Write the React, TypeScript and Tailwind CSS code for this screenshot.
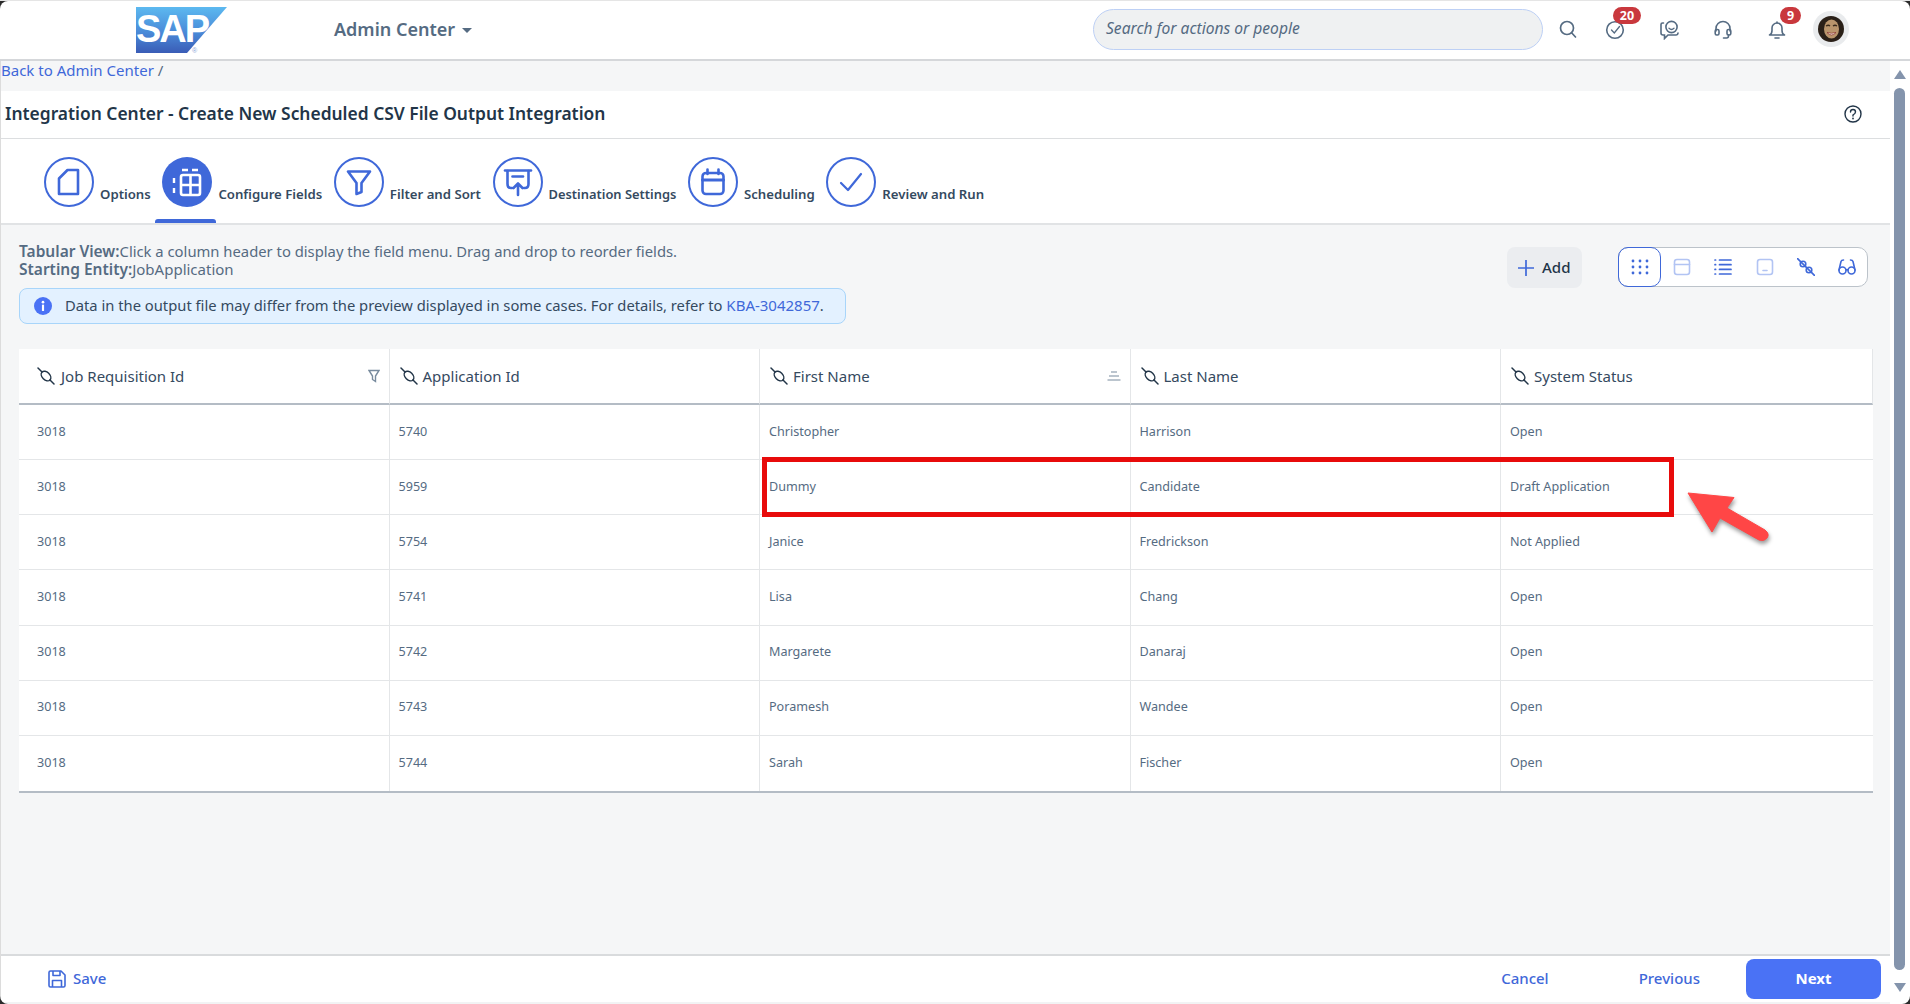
import React from "react";

const BLUE = "#3f68d9";

function Plug({ className = "" }: { className?: string }) {
  return (
    <svg viewBox="0 0 18 18" className={className} fill="none" stroke="#223548" strokeWidth="1.5" strokeLinecap="round">
      <path d="M1 1 5 5M13 13 17 17" />
      <ellipse cx="9" cy="9" rx="5.6" ry="3.8" transform="rotate(45 9 9)" />
    </svg>
  );
}

function HeaderIcon({ kind }: { kind: string }) {
  const c = "#556b82";
  const cls = "w-[22px] h-[22px] block";
  if (kind === "search")
    return (
      <svg viewBox="0 0 22 22" className={cls} fill="none" stroke={c} strokeWidth="1.7" strokeLinecap="round">
        <circle cx="10" cy="10" r="6.5" />
        <path d="M14.8 15 18.5 19" />
      </svg>
    );
  if (kind === "check")
    return (
      <svg viewBox="0 0 22 22" className={cls} fill="none" stroke={c} strokeWidth="1.6" strokeLinecap="round">
        <circle cx="11" cy="12" r="8.3" />
        <path d="M7.5 12 10.3 15 15.5 8.5" strokeWidth="1.3" />
      </svg>
    );
  if (kind === "chat")
    return (
      <svg viewBox="0 0 22 22" className={cls} fill="none" stroke={c} strokeWidth="1.6" strokeLinecap="round">
        <path d="M5.5 5H4.5Q3 5 3 6.5V15Q3 17 5 17H6.5V20.5L10 17H18Q19.8 17 20 15" />
        <circle cx="13.5" cy="9" r="5.6" />
        <path d="M11 10.3Q13.5 12.6 16 10.3" strokeWidth="1.3" />
      </svg>
    );
  if (kind === "head")
    return (
      <svg viewBox="0 0 22 22" className={cls} fill="none" stroke={c} strokeWidth="1.6" strokeLinecap="round">
        <path d="M4 13V10.5A7 7 0 0 1 18 10.5V13" />
        <rect x="3.2" y="11.5" width="3.8" height="5.5" rx="1.5" />
        <rect x="15" y="11.5" width="3.8" height="5.5" rx="1.5" />
        <path d="M16.5 17V18Q16.5 20 14.5 20H11.5" />
      </svg>
    );
  return (
    <svg viewBox="0 0 22 22" className={cls} fill="none" stroke={c} strokeWidth="1.6" strokeLinecap="round" strokeLinejoin="round">
      <path d="M3.5 17Q6 16 6 12.5V10A5 5 0 0 1 16 10V12.5Q16 16 18.5 17Z" />
      <path d="M9 20H13" />
      <path d="M11 5V4" />
    </svg>
  );
}

function Header() {
  return (
    <header className="h-[60px] shrink-0 bg-white flex items-center border-b-2 border-[#d5d7da] pl-[136px] pr-[61px] pb-[2px]">
      <div className="relative w-[91px] h-[46px] shrink-0 mt-[2px]">
        <svg viewBox="0 0 91 46" className="absolute inset-0 w-[91px] h-[46px]">
          <defs>
            <linearGradient id="sapg" x1="0" y1="0" x2="0" y2="1">
              <stop offset="0" stopColor="#5cb9f0" />
              <stop offset="0.55" stopColor="#4a8ad8" />
              <stop offset="1" stopColor="#3a5cb6" />
            </linearGradient>
          </defs>
          <polygon points="0,0 91,0 51,46 0,46" fill="url(#sapg)" />
        </svg>
        <span className="absolute left-0 top-[4px] text-white font-bold text-[38px] leading-[36px] tracking-[-2px] [font-family:'Liberation_Sans',sans-serif]">
          SAP
        </span>
        <span className="absolute left-[56px] top-[40px] text-[#8ea6d8] text-[7px] leading-[7px] [font-family:'Liberation_Sans',sans-serif]">®</span>
      </div>
      <div className="ml-[107px] flex items-center gap-[7px] text-[#556b82] font-semibold text-[18px] leading-[24px]">
        <span>Admin Center</span>
        <span className="w-0 h-0 border-x-[5px] border-x-transparent border-t-[5px] border-t-[#556b82] mt-[2px]" />
      </div>
      <div className="ml-auto w-[450px] h-[41px] rounded-full bg-[#eff1f2] border border-[#bdd0f5] flex items-center pl-[12px] italic text-[15.6px] text-[#556b82]">
        Search for actions or people
      </div>
      <div className="ml-[14px] flex items-center">
        <HeaderIcon kind="search" />
        <span className="relative ml-[25px]">
          <HeaderIcon kind="check" />
          <span className="absolute -top-[11px] left-[9px] w-[28px] h-[17px] rounded-full bg-[#c9383d] text-white text-[12.5px] leading-[17px] font-bold text-center">20</span>
        </span>
        <span className="ml-[32px]">
          <HeaderIcon kind="chat" />
        </span>
        <span className="ml-[32px]">
          <HeaderIcon kind="head" />
        </span>
        <span className="relative ml-[32px]">
          <HeaderIcon kind="bell" />
          <span className="absolute -top-[11px] left-[14px] w-[21px] h-[17px] rounded-full bg-[#c9383d] text-white text-[12.5px] leading-[17px] font-bold text-center">9</span>
        </span>
      </div>
      <div className="ml-[25px] w-[36px] h-[36px] rounded-full bg-[#e9ebed] flex items-center justify-center shrink-0">
        <svg viewBox="0 0 26 26" className="w-[26px] h-[26px]">
          <circle cx="13" cy="13" r="13" fill="#2a2018" />
          <ellipse cx="13.5" cy="13" rx="7.5" ry="9.5" fill="#b9956c" />
          <path d="M8 10Q10.5 8.5 12 10M15 10Q17 8.5 19 10" stroke="#3a2a1c" strokeWidth="1.3" fill="none" />
          <path d="M9 16.5Q13.5 21.5 18 16.5Q13.5 18 9 16.5" fill="#f4e9e0" stroke="#8a2d2d" strokeWidth="0.7" />
        </svg>
      </div>
    </header>
  );
}

function StepIcon({ kind, active }: { kind: string; active?: boolean }) {
  const c = active ? "#ffffff" : BLUE;
  const p = { fill: "none", stroke: c, strokeWidth: 2.6, strokeLinecap: "round" as const, strokeLinejoin: "round" as const };
  return (
    <svg viewBox="0 0 50 50" className="w-[50px] h-[50px] block shrink-0">
      <circle cx="25" cy="25" r={active ? 25 : 24} fill={active ? BLUE : "#fff"} stroke={BLUE} strokeWidth={active ? 0 : 2} />
      {kind === "file" && <path d="M23.5 13H34V37H15V21.5Z" {...p} />}
      {kind === "grid" && (
        <g>
          <rect x="19" y="18" width="19" height="20" rx="2" fill="none" stroke={c} strokeWidth="2.6" />
          <path d="M19 28H38M28.5 18V38" stroke={c} strokeWidth="2.6" />
          <path d="M20 13H26M30 13H36M12 21V26M12 31V36" stroke={c} strokeWidth="2.4" />
        </g>
      )}
      {kind === "filter" && <path d="M14 14.5H36L27.5 26V35L22.5 37V26Z" {...p} />}
      {kind === "dest" && (
        <g {...p}>
          <path d="M12 13.5H38" />
          <path d="M14.5 14V27Q14.5 31 18 31H19M35.5 14V27Q35.5 31 32 31H31" />
          <path d="M19.5 19.5H30" />
          <path d="M25 38V26.5M20.5 31 25 26.5 29.5 31" />
        </g>
      )}
      {kind === "cal" && (
        <g {...p}>
          <rect x="14.5" y="16" width="21" height="21" rx="3.5" />
          <path d="M14.5 23H35.5" strokeWidth="3" />
          <path d="M19.5 12.5V17M30.5 12.5V17" />
        </g>
      )}
      {kind === "ok" && <path d="M15 26 22 33 35 17" {...p} strokeWidth={2.2} />}
    </svg>
  );
}

const steps = [
  { kind: "file", label: "Options" },
  { kind: "grid", label: "Configure Fields", active: true },
  { kind: "filter", label: "Filter and Sort" },
  { kind: "dest", label: "Destination Settings" },
  { kind: "cal", label: "Scheduling" },
  { kind: "ok", label: "Review and Run" },
];

function Stepper() {
  return (
    <div className="h-[86px] shrink-0 bg-white border-b-2 border-[#e1e3e5] flex pl-[43px] gap-[11.6px]">
      {steps.map((s) => (
        <div key={s.label} className="relative flex gap-[6px] pt-[18px]">
          <StepIcon kind={s.kind} active={s.active} />
          <span className={`mt-[27px] leading-[20px] font-semibold text-[#354a5f] whitespace-nowrap ${s.kind === "dest" ? "text-[12.9px]" : "text-[13.2px]"}`}>{s.label}</span>
          {s.active && <span className="absolute -left-[7px] bottom-0 w-[61px] h-[4px] rounded-t-[3px] bg-[#3f68d9]" />}
        </div>
      ))}
    </div>
  );
}

function ViewIcon({ kind, light }: { kind: string; light?: boolean }) {
  const c = light ? "#b2c4f3" : BLUE;
  const base = { fill: "none", stroke: c, strokeWidth: 1.6, strokeLinecap: "round" as const };
  return (
    <svg viewBox="0 0 18 18" className="w-[18px] h-[18px]">
      {kind === "dots" &&
        [3, 9, 15].map((y) => [2, 9, 16].map((x) => <circle key={`${x}-${y}`} cx={x} cy={y} r="1.4" fill={c} />))}
      {kind === "top" && (
        <g {...base}>
          <rect x="1.5" y="1.5" width="15" height="15" rx="2.5" />
          <path d="M1.5 6.5H16.5" />
        </g>
      )}
      {kind === "list" && (
        <g {...base} strokeWidth={1.7}>
          <path d="M5.5 2H17M5.5 6.7H17M5.5 11.4H17M5.5 16H17M1 2H1.6M1 6.7H1.6M1 11.4H1.6M1 16H1.6" />
        </g>
      )}
      {kind === "bottom" && (
        <g {...base}>
          <rect x="1.5" y="1.5" width="15" height="15" rx="2.5" />
          <path d="M7 12.5H11" />
        </g>
      )}
      {kind === "plug" && (
        <g {...base}>
          <path d="M0.5 0.5 17.5 17.5" />
          <circle cx="6" cy="6" r="2.8" />
          <circle cx="12" cy="12" r="2.8" />
        </g>
      )}
      {kind === "glass" && (
        <g {...base}>
          <circle cx="4.5" cy="12.5" r="3.5" />
          <circle cx="13.5" cy="12.5" r="3.5" />
          <path d="M8 12Q9 11 10 12M1 12 3 3.5Q3.5 2 5.5 2M17 12 15 3.5Q14.5 2 12.5 2" />
        </g>
      )}
    </svg>
  );
}

const cols = ["Job Requisition Id", "Application Id", "First Name", "Last Name", "System Status"];
const rows = [
  ["3018", "5740", "Christopher", "Harrison", "Open"],
  ["3018", "5959", "Dummy", "Candidate", "Draft Application"],
  ["3018", "5754", "Janice", "Fredrickson", "Not Applied"],
  ["3018", "5741", "Lisa", "Chang", "Open"],
  ["3018", "5742", "Margarete", "Danaraj", "Open"],
  ["3018", "5743", "Poramesh", "Wandee", "Open"],
  ["3018", "5744", "Sarah", "Fischer", "Open"],
];

function DataTable() {
  return (
    <div className="w-[1854px] bg-white border-b-2 border-[#b4bcc5] grid grid-cols-[370.5px_370.5px_370.5px_370.5px_372px]">
      {cols.map((c, i) => (
        <div
          key={c}
          className={`h-[56px] flex items-center pr-[9px] border-b-2 border-[#b4bcc5] border-r border-r-[#e4e6e8] last:border-r-0 text-[15px] text-[#354a5f] ${i === 0 ? "pl-[18px] gap-[6px]" : "pl-[10px] gap-[5px]"}`}
        >
          <Plug className="w-[18px] h-[18px] shrink-0" />
          <span>{c}</span>
          {i === 0 && (
            <svg viewBox="0 0 12 14" className="ml-auto w-[12px] h-[14px]" fill="none" stroke="#788b9e" strokeWidth="1.4">
              <path d="M1 1.5H11L7.5 7V12.5L4.5 10.5V7Z" />
            </svg>
          )}
          {i === 2 && (
            <svg viewBox="0 0 14 10" className="ml-auto w-[14px] h-[10px]" fill="none" stroke="#788b9e" strokeWidth="1">
              <path d="M4 1H10M2 5H12M0.5 9H13.5" />
            </svg>
          )}
        </div>
      ))}
      {rows.map((r, ri) =>
        r.map((v, ci) => (
          <div
            key={`${ri}-${ci}`}
            className={`h-[55.15px] flex items-center text-[12.6px] text-[#556b82] ${ci === 0 ? "pl-[18px]" : "pl-[9px]"} ${ci === 4 ? "" : "border-r border-r-[#e4e6e8]"} ${ri < 6 ? "border-b border-b-[#e4e6e8]" : ""}`}
          >
            {v}
          </div>
        ))
      )}
    </div>
  );
}

function Content() {
  return (
    <div className="relative flex-1 min-h-0 bg-[#f5f6f7] pl-[18px] pr-[18px] pt-[17px]">
      <div className="flex justify-between h-[107px]">
        <div>
          <div className="text-[14.8px] leading-[18px] text-[#556b82] whitespace-nowrap">
            <b className="inline-block font-semibold text-[15.5px] leading-[18px]">Tabular View:</b>Click a column header to display the field menu. Drag and drop to reorder fields.
          </div>
          <div className="text-[14.8px] leading-[18px] text-[#556b82] whitespace-nowrap">
            <b className="inline-block font-semibold text-[15.5px] leading-[18px]">Starting Entity:</b>
            <span className="inline-block text-[15px] leading-[18px]">JobApplication</span>
          </div>
          <div className="mt-[10px] w-[827px] h-[36px] rounded-[8px] bg-[#e3f1ff] border border-[#a8d5fa] flex items-center pl-[14px] pb-[1px] text-[14.75px] text-[#354a5f]">
            <svg viewBox="0 0 20 20" className="w-[18px] h-[18px] shrink-0">
              <circle cx="10" cy="10" r="10" fill="#4a72f5" />
              <rect x="8.8" y="8.5" width="2.4" height="7" fill="#fff" />
              <circle cx="10" cy="5.7" r="1.5" fill="#fff" />
            </svg>
            <span className="ml-[13px] whitespace-nowrap">
              Data in the output file may differ from the preview displayed in some cases. For details, refer to{" "}
              <span className="text-[#3f68d9] text-[15px]">KBA-3042857</span>.
            </span>
          </div>
        </div>
        <div className="flex items-start gap-[36px] mt-[5px] pr-[4px]">
          <div className="w-[75px] h-[41px] rounded-[8px] bg-[#ebedf0] flex items-center pl-[11px] gap-[8px] text-[15px] font-medium text-[#223548]">
            <svg viewBox="0 0 16 16" className="w-[16px] h-[16px]" stroke="#3f68d9" strokeWidth="1.7">
              <path d="M8 0V16M0 8H16" />
            </svg>
            Add
          </div>
          <div className="w-[250px] h-[40px] rounded-[10px] bg-white border border-[#bcc3ca] flex items-center">
            <div className="w-[43px] h-[40px] -ml-px rounded-[10px] border border-[#3f68d9] flex items-center justify-center">
              <ViewIcon kind="dots" />
            </div>
            <div className="flex-1 flex justify-between pl-[12px] pr-[11px]">
              <ViewIcon kind="top" light />
              <ViewIcon kind="list" />
              <ViewIcon kind="bottom" light />
              <ViewIcon kind="plug" />
              <ViewIcon kind="glass" />
            </div>
          </div>
        </div>
      </div>
      <DataTable />
      {/* Highlight drawn on top of the table */}
      <div className="absolute left-[761px] top-[232px] w-[912px] h-[60px] border-[5px] border-[#e80b0b]" />
      <svg viewBox="0 0 100 70" className="absolute left-[1679px] top-[263px] w-[100px] h-[70px] drop-shadow-[1px_3px_2px_rgba(0,0,0,0.4)]">
        <path
          d="M8 5 54 9.5 47 20 85 42Q90 46 87 50 84 54 79 52L40 30 32 44Z"
          fill="#ff4646"
          stroke="#ff4646"
          strokeWidth="1"
          strokeLinejoin="round"
        />
      </svg>
    </div>
  );
}

function Footer() {
  return (
    <footer className="h-[50px] shrink-0 bg-white border-t-2 border-b-2 border-t-[#d9dbdd] border-b-[#f2f3f4] flex items-center pl-[47px] pr-[9px] text-[15px] font-medium text-[#3f68d9]">
      <svg viewBox="0 0 18 18" className="w-[18px] h-[18px]" fill="none" stroke="#3f68d9" strokeWidth="1.6" strokeLinejoin="round">
        <path d="M1 2.5Q1 1 2.5 1H13L17 5V15.5Q17 17 15.5 17H2.5Q1 17 1 15.5Z" />
        <path d="M5 1V5.5H12V1M4.5 17V10.5H13.5V17" />
      </svg>
      <span className="ml-[7px] pb-[2px]">Save</span>
      <span className="ml-auto pb-[2px]">Cancel</span>
      <span className="ml-[90px] pb-[2px]">Previous</span>
      <span className="ml-[46px] w-[135px] h-[40px] rounded-[8px] bg-[#4a72f5] text-white font-bold flex items-center justify-center pb-[2px]">Next</span>
    </footer>
  );
}

function Scrollbar() {
  return (
    <div className="w-[20px] shrink-0 bg-white flex flex-col items-center pt-[9px] pb-[12px] pr-[1px]">
      <span className="w-0 h-0 border-x-[6px] border-x-transparent border-b-[9px] border-b-[#8494ac]" />
      <span className="flex-1 w-[11px] mt-[9px] mb-[13px] rounded-full bg-[#8494ac]" />
      <span className="w-0 h-0 border-x-[6px] border-x-transparent border-t-[9px] border-t-[#8494ac]" />
    </div>
  );
}

export default function App() {
  return (
    <div className="relative w-[1910px] h-[1004px] overflow-hidden flex flex-col bg-white font-['Noto_Sans',sans-serif] border-t border-[#e5e5e5]">
      <Header />
      <div className="flex-1 min-h-0 flex">
        <div className="flex-1 min-w-0 flex flex-col border-l border-[#dcdcdc]">
          <div className="h-[30px] shrink-0 bg-[#f5f6f7] flex items-center pb-[11px] text-[15px] text-[#556b82]">
            <span className="text-[#3f68d9]">Back to Admin Center</span>
            <span className="ml-[4px]">/</span>
          </div>
          <div className="h-[48px] shrink-0 bg-white border-b border-[#dcdee0] flex items-center justify-between pl-[4px] pr-[28px] pb-[2px]">
            <span className="text-[17.4px] font-semibold text-[#223548]">Integration Center - Create New Scheduled CSV File Output Integration</span>
            <svg viewBox="0 0 18 18" className="w-[18px] h-[18px]" fill="none" stroke="#223548" strokeWidth="1.4" strokeLinecap="round">
              <circle cx="9" cy="9" r="8" />
              <path d="M6.5 7Q6.5 4.5 9 4.5T11.5 7Q11.5 8.5 9 10V11" />
              <path d="M9 13.5V13.6" strokeWidth="1.8" />
            </svg>
          </div>
          <Stepper />
          <Content />
          <Footer />
        </div>
        <Scrollbar />
      </div>
      <div className="pointer-events-none absolute inset-0 rounded-[8px] shadow-[0_0_0_8px_#2a2a2a]" />
    </div>
  );
}
